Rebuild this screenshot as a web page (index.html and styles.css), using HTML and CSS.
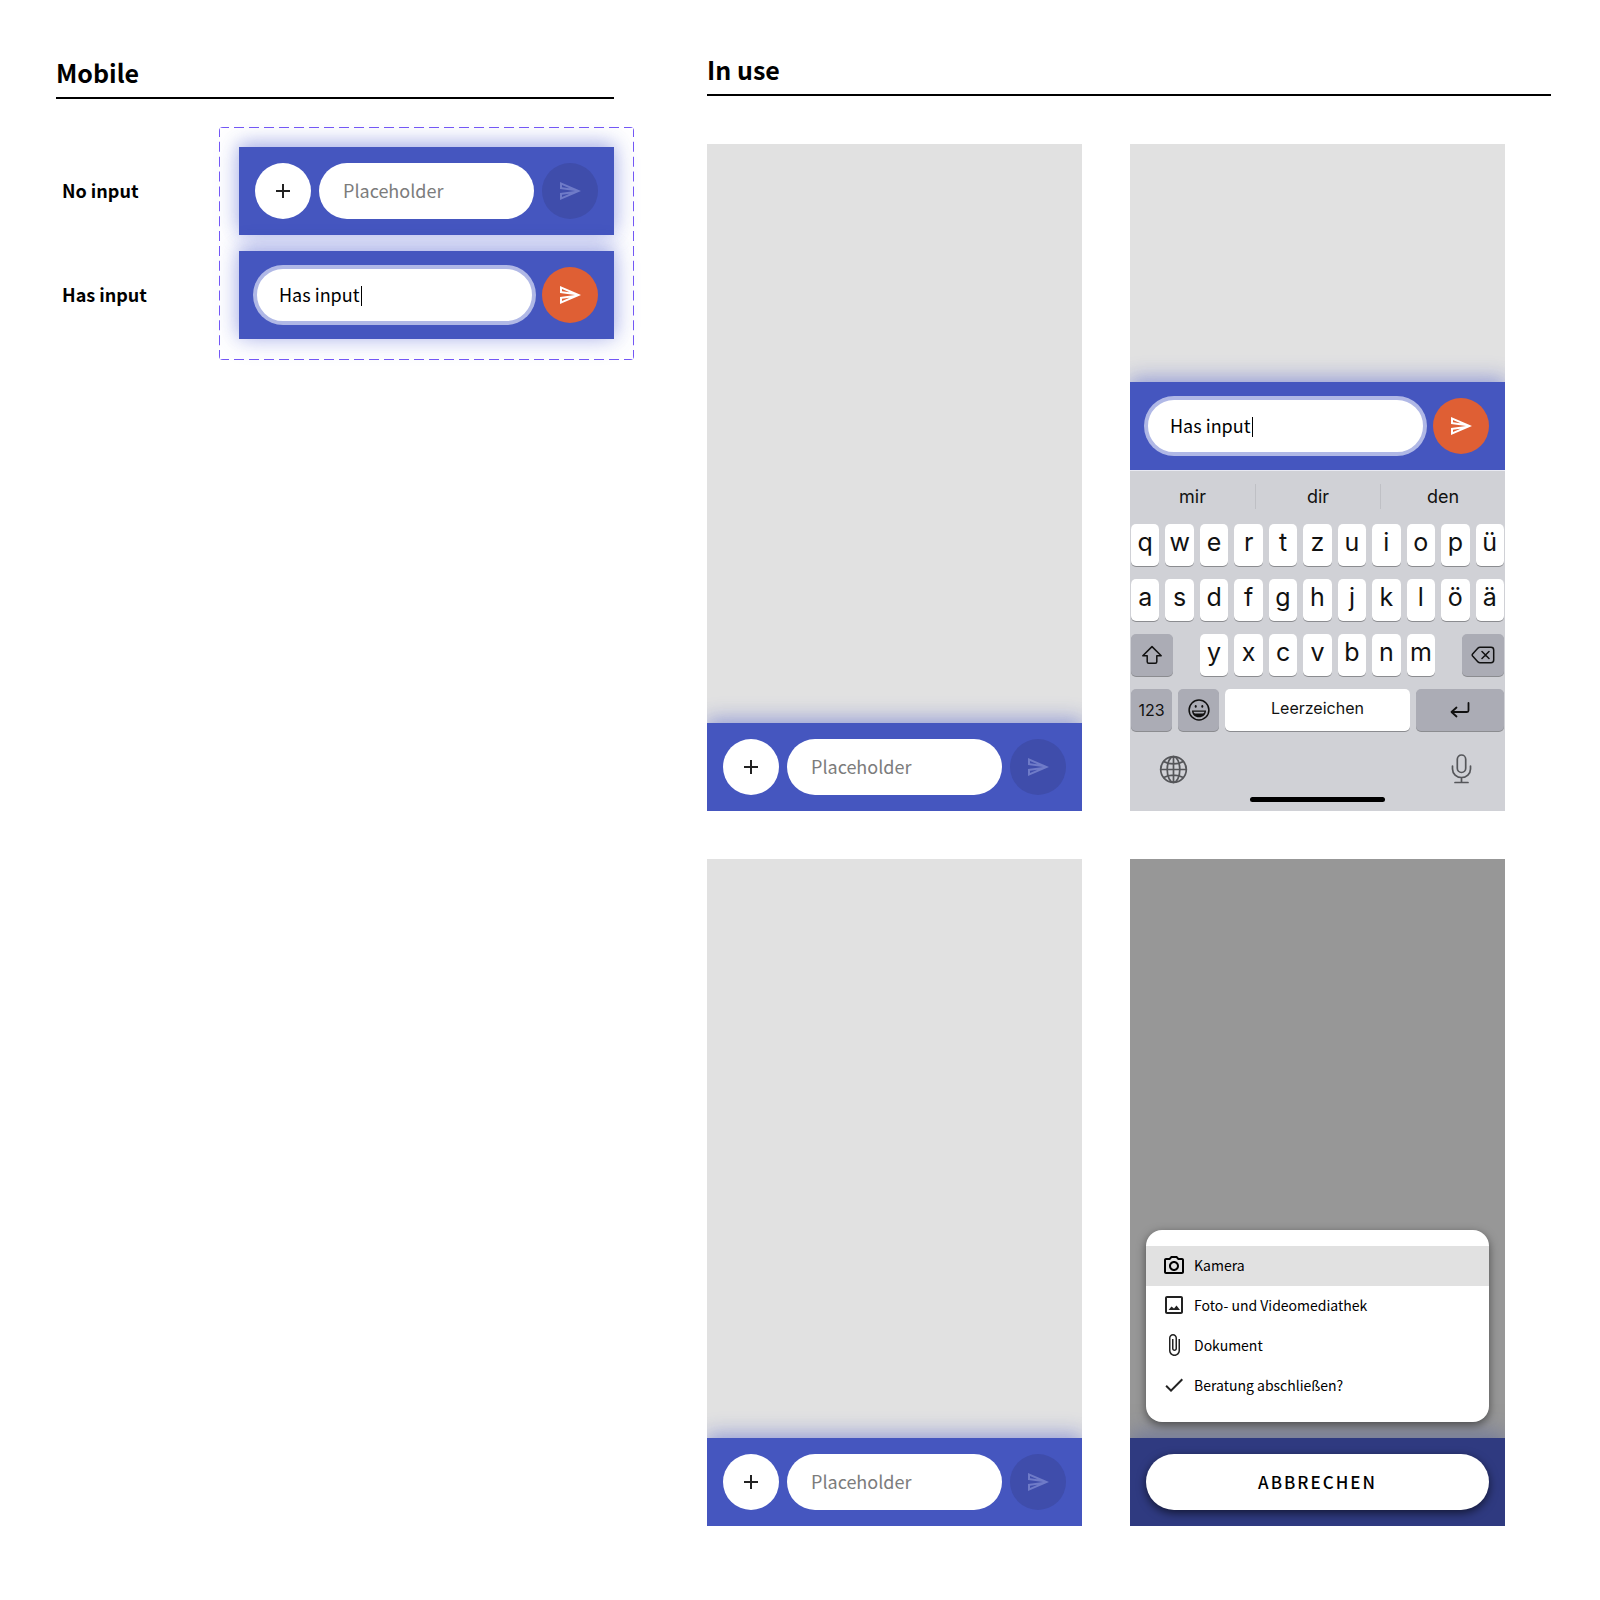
FILE: index.html
```html
<!DOCTYPE html>
<html lang="de">
<head>
<meta charset="utf-8">
<meta name="viewport" content="width=device-width, initial-scale=1">
<title>Message input</title>
<link rel="stylesheet" href="styles.css">
</head>
<body>
<svg class="sprite" aria-hidden="true">
  <symbol id="i-add" viewBox="0 0 24 24"><path d="M19 13h-6v6h-2v-6H5v-2h6V5h2v6h6v2z"/></symbol>
  <symbol id="i-send" viewBox="0 0 24 24"><path d="M4.01 6.03l7.51 3.22-7.52-1 .01-2.22m7.5 8.72L4 17.97v-2.22l7.51-1M2.01 3L2 10l15 2-15 2 .01 7L23 12 2.01 3z"/></symbol>
</svg>

<main class="page">
  <section class="section section-mobile">
    <h2 class="section-title">Mobile</h2>
    <div class="variants">
      <div class="variant-labels">
        <h3 class="variant-label">No input</h3>
        <h3 class="variant-label">Has input</h3>
      </div>
      <div class="variant-frame">
        <svg class="frame-outline" aria-hidden="true">
          <line x1="0" y1="0" x2="100%" y2="0" pathLength="415"/>
          <line x1="0" y1="100%" x2="100%" y2="100%" pathLength="415"/>
          <line x1="0" y1="0" x2="0" y2="100%" pathLength="235"/>
          <line x1="100%" y1="0" x2="100%" y2="100%" pathLength="235"/>
        </svg>
        <form class="bar">
          <button class="round add" type="button" aria-label="Add"><svg class="icon"><use href="#i-add"/></svg></button>
          <input class="field" type="text" placeholder="Placeholder" aria-label="Message">
          <button class="round send" type="button" aria-label="Send" disabled><svg class="icon"><use href="#i-send"/></svg></button>
        </form>
        <form class="bar">
          <label class="field field-active"><input class="field-value" type="text" value="Has input" aria-label="Message"><span class="caret"></span></label>
          <button class="round send" type="button" aria-label="Send"><svg class="icon"><use href="#i-send"/></svg></button>
        </form>
      </div>
    </div>
  </section>

  <section class="section section-use">
    <h2 class="section-title">In use</h2>
    <div class="screens">
      <article class="screen">
        <form class="bar">
          <button class="round add" type="button" aria-label="Add"><svg class="icon"><use href="#i-add"/></svg></button>
          <input class="field" type="text" placeholder="Placeholder" aria-label="Message">
          <button class="round send" type="button" aria-label="Send" disabled><svg class="icon"><use href="#i-send"/></svg></button>
        </form>
      </article>

      <article class="screen">
        <form class="bar">
          <label class="field field-active"><input class="field-value" type="text" value="Has input" aria-label="Message"><span class="caret"></span></label>
          <button class="round send" type="button" aria-label="Send"><svg class="icon"><use href="#i-send"/></svg></button>
        </form>
        <div class="keyboard">
          <div class="suggestions">
            <button class="suggestion" type="button">mir</button>
            <button class="suggestion" type="button">dir</button>
            <button class="suggestion" type="button">den</button>
          </div>
          <div class="keys">
            <div class="key-row">
              <button class="key" type="button">q</button><button class="key" type="button">w</button><button class="key" type="button">e</button><button class="key" type="button">r</button><button class="key" type="button">t</button><button class="key" type="button">z</button><button class="key" type="button">u</button><button class="key" type="button">i</button><button class="key" type="button">o</button><button class="key" type="button">p</button><button class="key" type="button">ü</button>
            </div>
            <div class="key-row">
              <button class="key" type="button">a</button><button class="key" type="button">s</button><button class="key" type="button">d</button><button class="key" type="button">f</button><button class="key" type="button">g</button><button class="key" type="button">h</button><button class="key" type="button">j</button><button class="key" type="button">k</button><button class="key" type="button">l</button><button class="key" type="button">ö</button><button class="key" type="button">ä</button>
            </div>
            <div class="key-row">
              <button class="key key-dark key-shift" type="button" aria-label="Shift">
                <svg class="key-icon" viewBox="0 0 22 20"><path d="M11 1.6 1.8 10.800H6.200V16.700Q6.200 18.200 7.700 18.200H14.300Q15.800 18.200 15.800 16.700V10.800H20.200Z"/></svg>
              </button>
              <button class="key" type="button">y</button><button class="key" type="button">x</button><button class="key" type="button">c</button><button class="key" type="button">v</button><button class="key" type="button">b</button><button class="key" type="button">n</button><button class="key" type="button">m</button>
              <button class="key key-dark key-delete" type="button" aria-label="Löschen">
                <svg class="key-icon key-icon-delete" viewBox="0 0 24 18"><path d="M9 1.300H20Q22.700 1.300 22.700 4V14Q22.700 16.700 20 16.700H9Q7.800 16.700 7 15.900L1.600 10Q.8 9 1.600 8L7 2.100Q7.800 1.300 9 1.300ZM11 5.500l7 7M18 5.500l-7 7"/></svg>
              </button>
            </div>
            <div class="key-row key-row-bottom">
              <button class="key key-dark key-text key-small" type="button">123</button>
              <button class="key key-dark key-small" type="button" aria-label="Emoji">
                <svg class="key-icon key-icon-emoji" viewBox="0 0 22 22"><circle cx="11" cy="11" r="9.900"/><ellipse class="solid" cx="7.700" cy="7.400" rx="1" ry="1.400"/><ellipse class="solid" cx="14.300" cy="7.400" rx="1" ry="1.400"/><path class="solid" fill-rule="evenodd" d="M4 11.500h14c0 4-3 6.800-7 6.800s-7-2.800-7-6.800zM5.500 12.700c.3 1 .8 1.500 1.500 1.900h8c.7-.4 1.200-.9 1.500-1.900z"/></svg>
              </button>
              <button class="key key-text key-space" type="button">Leerzeichen</button>
              <button class="key key-dark key-return" type="button" aria-label="Eingabe">
                <svg class="key-icon key-icon-return" viewBox="0 0 20 16"><path d="M18.500 1V8.500Q18.500 10 17 10H2M6.500 5.500 1.500 10l5 4.500"/></svg>
              </button>
            </div>
          </div>
          <div class="keyboard-footer">
            <button class="system-key" type="button" aria-label="Sprache">
              <svg class="system-icon" viewBox="0 0 29 29"><circle cx="14.500" cy="14.500" r="12.800"/><ellipse cx="14.500" cy="14.500" rx="6.300" ry="12.800"/><path d="M14.500 1.700v25.600M1.700 14.500h25.600M4.800 6.500c5 3.200 14.400 3.200 19.400 0M4.800 22.500c5-3.200 14.400-3.200 19.400 0"/></svg>
            </button>
            <button class="system-key" type="button" aria-label="Diktieren">
              <svg class="system-icon" viewBox="0 0 29 29"><rect x="10.300" y="0" width="8.400" height="17.500" rx="4.200"/><path d="M5.500 11v3a9 8.500 0 0 0 18 0V11M14.500 22.500v5M8 27.500h13"/></svg>
            </button>
          </div>
          <div class="home-indicator"></div>
        </div>
      </article>

      <article class="screen">
        <form class="bar">
          <button class="round add" type="button" aria-label="Add"><svg class="icon"><use href="#i-add"/></svg></button>
          <input class="field" type="text" placeholder="Placeholder" aria-label="Message">
          <button class="round send" type="button" aria-label="Send" disabled><svg class="icon"><use href="#i-send"/></svg></button>
        </form>
      </article>

      <article class="screen screen-dimmed">
        <div class="sheet">
          <button class="sheet-item selected" type="button"><svg class="icon" viewBox="0 0 24 24"><path d="M20 5h-3.170L15 3H9L7.170 5H4c-1.100 0-2 .9-2 2v12c0 1.100.9 2 2 2h16c1.100 0 2-.9 2-2V7c0-1.100-.9-2-2-2zm0 14H4V7h4.050l1.830-2h4.240l1.830 2H20v12zM12 8c-2.760 0-5 2.240-5 5s2.240 5 5 5 5-2.240 5-5-2.240-5-5-5zm0 8c-1.650 0-3-1.350-3-3s1.350-3 3-3 3 1.350 3 3-1.350 3-3 3z"/></svg>Kamera</button>
          <button class="sheet-item" type="button"><svg class="icon" viewBox="0 0 24 24"><path d="M19 5v14H5V5h14m0-2H5c-1.100 0-2 .9-2 2v14c0 1.100.9 2 2 2h14c1.100 0 2-.9 2-2V5c0-1.100-.9-2-2-2zM14.500 12.500l-2.500 3-2.500-2L6.500 17h11.500z"/></svg>Foto- und Videomediathek</button>
          <button class="sheet-item" type="button"><svg class="icon" viewBox="0 0 24 24"><path d="M16.500 6v11.500c0 2.210-1.790 4-4 4s-4-1.790-4-4V5c0-1.380 1.120-2.500 2.500-2.500s2.500 1.120 2.500 2.500v10.500c0 .55-.45 1-1 1s-1-.45-1-1V6H10v9.500c0 1.380 1.120 2.500 2.500 2.500s2.500-1.120 2.500-2.500V5c0-2.210-1.790-4-4-4S7 2.790 7 5v12.500c0 3.040 2.460 5.500 5.500 5.500s5.500-2.460 5.500-5.500V6h-1.500z"/></svg>Dokument</button>
          <button class="sheet-item" type="button"><svg class="icon" viewBox="0 0 24 24"><path d="M9 16.170L4.830 12l-1.420 1.410L9 19 21 7l-1.410-1.410L9 16.170z"/></svg>Beratung abschließen?</button>
        </div>
        <div class="bar bar-dimmed">
          <button class="cancel" type="button">ABBRECHEN</button>
        </div>
      </article>
    </div>
  </section>
</main>
</body>
</html>
```
FILE: styles.css
```css
:root {
  --blue: #4556bf;
  --ink: #000;
  --text: "Noto Sans CJK SC", "Noto Sans", sans-serif;
  --system: Inter, "Liberation Sans", sans-serif;
}

* { box-sizing: border-box; }

body {
  margin: 0;
  background: #fff;
  color: var(--ink);
  font-family: var(--text);
}

button, input { font: inherit; color: inherit; }

button {
  margin: 0;
  padding: 0;
  border: 0;
  background: none;
}

.sprite {
  position: absolute;
  width: 0;
  height: 0;
}

.page {
  display: grid;
  grid-template-columns: minmax(0, 558px) minmax(0, 1fr);
  column-gap: 93px;
  padding: 51px 49px 72px 56px;
}

.section-mobile { padding-top: 3px; }

.section-title {
  margin: 0;
  padding-bottom: 7px;
  border-bottom: 2px solid var(--ink);
  font-size: 25px;
  line-height: 36px;
  font-weight: 700;
}

/* Component variants */
.variants {
  display: flex;
  justify-content: space-between;
  margin: 28px -20px 0 0;
}

.variant-labels {
  display: grid;
  grid-auto-rows: 88px;
  row-gap: 16px;
  padding: 20px 0 0 6px;
}

.variant-label {
  align-self: center;
  margin: 0;
  padding-bottom: 2px;
  font-size: 18px;
  line-height: 28px;
  font-weight: 700;
}

.variant-frame {
  position: relative;
  display: grid;
  grid-template-columns: minmax(0, 1fr);
  row-gap: 16px;
  width: 415px;
  padding: 20px 20px 21px;
}

.frame-outline {
  position: absolute;
  inset: 0;
  width: 100%;
  height: 100%;
  border-radius: 4px;
  stroke: #7357f5;
  stroke-width: 2;
  stroke-dasharray: 10 5;
}

/* Input bar */
.bar {
  display: flex;
  gap: 8px;
  margin: 0;
  padding: 16px;
  background: var(--blue);
  box-shadow: 0 0 24px rgba(69, 86, 220, 0.3), 0 -4px 16px rgba(69, 86, 191, 0.3);
}

.icon {
  flex: none;
  width: 24px;
  height: 24px;
  fill: currentColor;
}

.round {
  display: grid;
  place-items: center;
  flex: none;
  width: 56px;
  height: 56px;
  border-radius: 50%;
}

.add { background: #fff; color: #222; }

.send { background: #df5f34; color: #fff; }

.send:disabled { background: #3f4dab; color: #6f7bc8; }

.field {
  flex: 1;
  min-width: 0;
  height: 56px;
  padding: 0 24px 2px;
  border: 0;
  border-radius: 28px;
  outline: 0;
  background: #fff;
  font-size: 18px;
}

.field::placeholder { color: #7c7c7c; opacity: 1; }

.field-active {
  display: flex;
  align-items: center;
  padding: 0 22px 2px;
  border: 2px solid #b0b8e6;
  box-shadow: 0 0 0 2px #b0b8e6;
}

.field-value {
  width: 82px;
  padding: 0;
  border: 0;
  outline: 0;
  background: none;
}

.caret {
  width: 1px;
  height: 20px;
  margin-top: 4px;
  background: var(--ink);
}

/* Phone screens */
.screens {
  display: flex;
  flex-wrap: wrap;
  gap: 48px;
  margin-top: 48px;
}

.screen {
  display: flex;
  flex-direction: column;
  justify-content: flex-end;
  width: 375px;
  min-height: 667px;
  overflow: hidden;
  background: #e1e1e1;
}

.screen-dimmed { background: #979797; }

/* Keyboard */
.keyboard {
  position: relative;
  border-top: 1px solid #e8e9f2;
  background: #d0d1d6;
  color: #111;
  font-family: var(--system);
}

.suggestions {
  display: grid;
  grid-template-columns: repeat(3, 1fr);
  padding: 13px 0 15px;
}

.suggestion {
  height: 25px;
  font-size: 18px;
  line-height: 25px;
}

.suggestion + .suggestion { border-left: 1px solid #bfc0c5; }

.keys {
  display: grid;
  row-gap: 13px;
  padding: 0 1px;
}

.key-row {
  display: grid;
  grid-template-columns: repeat(11, 1fr);
  column-gap: 6px;
}

.key {
  display: grid;
  place-items: center;
  height: 42px;
  padding-bottom: 6px;
  border-radius: 5px;
  background: #fff;
  box-shadow: 0 1px 0 #8b8c90;
  font-size: 25px;
  line-height: 32px;
  font-weight: 400;
}

.key-dark { padding-bottom: 0; background: #abacb5; }

.key-text { font-size: 16px; }

.key-shift { grid-column: 1 / span 2; width: 42px; }

.key-delete { grid-column: 10 / span 2; justify-self: end; width: 42px; }

.key-row-bottom { display: flex; }

.key-small { width: 41px; }

.key-space { flex: 1; padding-bottom: 4px; }

.key-return { width: 88px; }

.key-icon {
  height: 20px;
  fill: none;
  stroke: #111;
  stroke-width: 1.5;
  stroke-linejoin: round;
  stroke-linecap: round;
}

.key-icon-delete { height: 18px; }

.key-icon-emoji { height: 22px; }

.key-icon-return { height: 16px; stroke-width: 1.8; }

.solid { fill: #111; stroke: none; }

.keyboard-footer {
  display: flex;
  justify-content: space-between;
  padding: 24px 29px 13px;
}

.system-key { display: grid; }

.system-icon {
  width: 29px;
  height: 29px;
  overflow: visible;
  fill: none;
  stroke: #55565a;
  stroke-width: 1.7;
  stroke-linecap: round;
}

.home-indicator {
  width: 135px;
  height: 5px;
  margin: 0 auto 9px;
  border-radius: 3px;
  background: #000;
}

/* Action sheet */
.sheet {
  position: relative;
  z-index: 1;
  margin: 0 16px 16px;
  padding: 16px 0;
  border-radius: 16px;
  background: #fff;
  box-shadow: 0 3px 10px rgba(0, 0, 0, 0.5);
}

.sheet-item {
  display: flex;
  align-items: center;
  gap: 8px;
  width: 100%;
  height: 40px;
  padding: 0 16px 2px;
  font-size: 14px;
}

.sheet-item .icon { color: #222; }

.selected { background: #e1e1e1; }

.selected .icon { color: #000; }

.bar-dimmed {
  background: #2f3a80;
  box-shadow: 0 -4px 20px rgba(69, 86, 160, 0.5);
}

.cancel {
  flex: 1;
  height: 56px;
  padding-bottom: 2px;
  border-radius: 28px;
  background: #fff;
  box-shadow: 0 3px 10px rgba(0, 0, 0, 0.6);
  font-size: 17px;
  font-weight: 500;
  letter-spacing: 2px;
}
```
